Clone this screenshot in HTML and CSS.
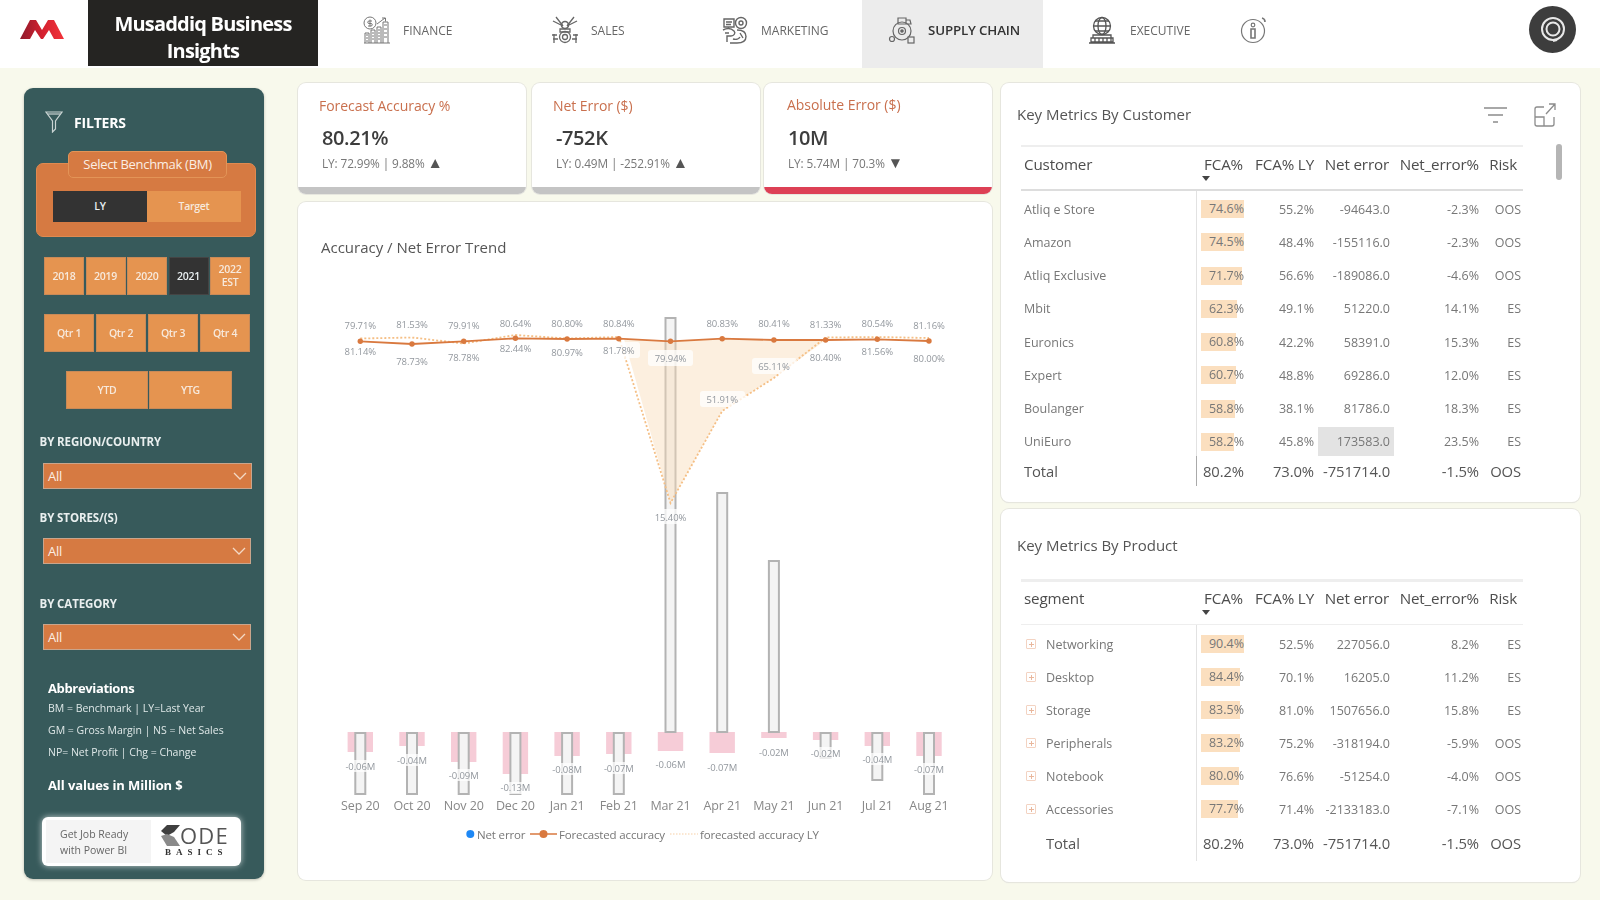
FILE: index.html
```html
<!DOCTYPE html>
<html lang="en">
<head>
<meta charset="utf-8">
<title>Musaddiq Business Insights</title>
<link rel="stylesheet" href="styles.css">
</head>
<body>
<header class="topbar">
  <div class="logo">
    <svg width="44" height="20" viewBox="0 0 44 20"><defs><linearGradient id="lg" x1="0" x2="1" y1="0" y2="0"><stop offset="0" stop-color="#8e1a2b"/><stop offset=".5" stop-color="#d3202f"/><stop offset="1" stop-color="#f2343a"/></linearGradient></defs><path fill="url(#lg)" d="M0 20 L10 1 L16 1 L22 11 L28 1 L34 1 L44 20 L34 20 L29 11 L23 20 L21 20 L15 11 L10 20 Z"/></svg>
  </div>
  <div class="brand">Musaddiq Business Insights</div>
  <nav class="nav">
    <a class="nav-item">
      <svg class="nav-icon" viewBox="0 0 28 28" fill="none" stroke="#777" stroke-width="1"><circle cx="7" cy="7" r="6"/><path d="M7 3.500v7M9 5H6a1.200 1.200 0 000 2.500h2a1.200 1.200 0 010 2.500H5"/><path d="M2 27V17h4v10M8 27V14h4v13M14 27V11h4v16M20 27V6h5v21M1 27h26M14 8l8-6M19 2h3.500v3.500M3 19h2M3 22h2M3 25h2M9 17h2M9 20h2M9 23h2M15 14h2M15 17h2M15 20h2M15 23h2M21 9h3M21 13h3M21 17h3M21 21h3"/></svg>
      <span>FINANCE</span>
    </a>
    <a class="nav-item">
      <svg class="nav-icon" viewBox="0 0 28 28" fill="none" stroke="#666" stroke-width="1.300"><circle cx="14" cy="21" r="5.500"/><circle cx="14" cy="21" r="2.500"/><path d="M5 1l7 9M23 1l-7 9M2 5l8 4M26 5l-8 4M3 27v-9M25 27v-9M1 19h5M22 19h5M2 23h5M21 23h5"/><circle cx="14" cy="9" r="3.500" stroke-width="1.600"/><path d="M9 13h10v3H9z"/></svg>
      <span>SALES</span>
    </a>
    <a class="nav-item">
      <svg class="nav-icon" viewBox="0 0 28 28" fill="none" stroke="#666" stroke-width="1.400"><circle cx="20" cy="7" r="5.500"/><circle cx="20" cy="7" r="2"/><path d="M3 3h10v8H3zM5 6h6M5 8.500h5M2 14c4-2 8-2 11 1 2 2 0 5-3 5H6v6M16 14c5 0 9 2 9 6.500S21 27 16 27H9M12 23c3 1 6 0 7-2M4 17h4M19 17l3 5"/></svg>
      <span>MARKETING</span>
    </a>
    <a class="nav-item is-active">
      <svg class="nav-icon" viewBox="0 0 28 28" fill="none" stroke="#666" stroke-width="1.200"><circle cx="14" cy="15" r="9"/><circle cx="14" cy="15" r="3.500"/><circle cx="14" cy="15" r="1.200" fill="#666"/><path d="M10 2h8v6h-8zM18 4h4l1 4h-5z"/><circle cx="4" cy="23" r="2.500" fill="#ececec"/><rect x="20" y="21" width="6" height="6" fill="#ececec"/></svg>
      <span>SUPPLY CHAIN</span>
    </a>
    <a class="nav-item nav-exec">
      <svg class="nav-icon" viewBox="0 0 28 28" fill="none" stroke="#555" stroke-width="1.300"><circle cx="14" cy="10" r="8.500"/><ellipse cx="14" cy="10" rx="4" ry="8.500"/><path d="M5.500 10h17M7 5h14M7 15h14M5 19h18v3H5zM3 22h22v4H3zM1 27h26M7 22v4M11 22v4M15 22v4M19 22v4M23 22v4"/></svg>
      <span>EXECUTIVE</span>
    </a>
    <a class="nav-item">
      <svg class="nav-icon" viewBox="0 0 28 28" fill="none" stroke="#777" stroke-width="1.200"><circle cx="13" cy="15" r="11.500"/><circle cx="13" cy="9" r="1.800"/><path d="M11 13h4v9h-4zM22 2a4 4 0 013 4" stroke-width="1.600"/></svg>
    </a>
  </nav>
  <div class="avatar">
    <svg width="30" height="30" viewBox="0 0 30 30" fill="none" stroke="#e8e8e8"><circle cx="15" cy="14" r="11" stroke-width="2"/><circle cx="15" cy="14" r="6.500" stroke-width="2"/><path d="M19 25l-4 1" stroke-width="2"/></svg>
  </div>
</header>

<main class="layout">
  <aside class="sidebar">
    <div class="filters-head">
      <svg width="18" height="22" viewBox="0 0 18 22" fill="none" stroke="#c9d4d3" stroke-width="1.200"><path d="M1 1h16L10.500 10v8l-3 3V10z"/><path d="M2.500 3h13"/></svg>
      <span>FILTERS</span>
    </div>
    <div class="bench">
      <div class="bench-tab">Select Benchmak (BM)</div>
      <div class="seg">
        <div class="btn btn-dark">LY</div>
        <div class="btn">Target</div>
      </div>
    </div>
    <div class="years">
      <div class="btn">2018</div><div class="btn">2019</div><div class="btn">2020</div><div class="btn btn-dark">2021</div><div class="btn">2022<br>EST</div>
    </div>
    <div class="qtrs">
      <div class="btn">Qtr 1</div><div class="btn">Qtr 2</div><div class="btn">Qtr 3</div><div class="btn">Qtr 4</div>
    </div>
    <div class="ytd">
      <div class="btn">YTD</div><div class="btn">YTG</div>
    </div>
    <div class="slicer-label region-label">BY REGION/COUNTRY</div>
    <div class="dropdown dropdown-wide">All<svg class="chev" viewBox="0 0 14 8" fill="none" stroke="#f3d9c5" stroke-width="1.300"><path d="M1 1l6 6 6-6"/></svg></div>
    <div class="slicer-label store-label">BY STORES/(S)</div>
    <div class="dropdown">All<svg class="chev" viewBox="0 0 14 8" fill="none" stroke="#f3d9c5" stroke-width="1.300"><path d="M1 1l6 6 6-6"/></svg></div>
    <div class="slicer-label cat-label">BY CATEGORY</div>
    <div class="dropdown">All<svg class="chev" viewBox="0 0 14 8" fill="none" stroke="#f3d9c5" stroke-width="1.300"><path d="M1 1l6 6 6-6"/></svg></div>
    <div class="abbr">
      <h3>Abbreviations</h3>
      <p>BM = Benchmark | LY=Last Year</p>
      <p>GM = Gross Margin | NS = Net Sales</p>
      <p>NP= Net Profit | Chg = Change</p>
      <h4>All values in Million $</h4>
    </div>
    <div class="promo">
      <div class="promo-text">Get Job Ready<br>with Power BI</div>
      <div class="promo-logo">
        <div class="promo-word">
          <svg width="19" height="21" viewBox="0 0 19 21"><path fill="#3f3f3f" d="M6 0h13l-6 7-7 4-6-5z"/><path fill="#8a8a8a" d="M0 11l6-2 7 3 6 9H6z"/></svg>
          <span>ODE</span>
        </div>
        <div class="promo-sub">BASICS</div>
      </div>
    </div>
  </aside>

  <section class="middle">
    <div class="kpis">
      <article class="kpi">
        <div class="kpi-title">Forecast Accuracy %</div>
        <div class="kpi-value">80.21%</div>
        <div class="kpi-sub">LY: 72.99% | 9.88% <span class="tri">▲</span></div>
        <div class="kpi-band"></div>
      </article>
      <article class="kpi">
        <div class="kpi-title">Net Error ($)</div>
        <div class="kpi-value">-752K</div>
        <div class="kpi-sub">LY: 0.49M | -252.91% <span class="tri">▲</span></div>
        <div class="kpi-band"></div>
      </article>
      <article class="kpi kpi-abs">
        <div class="kpi-title">Absolute Error ($)</div>
        <div class="kpi-value">10M</div>
        <div class="kpi-sub">LY: 5.74M | 70.3% <span class="tri">▼</span></div>
        <div class="kpi-band kpi-band-red"></div>
      </article>
    </div>
    <article class="chart-card">
      <h2 class="chart-title">Accuracy / Net Error Trend</h2>
      <svg class="chart" width="694" height="580" viewBox="298 300 694 580">
        <g class="pink">
          <rect x="347.600" y="732" width="25.400" height="20"/><rect x="399.300" y="732" width="25.400" height="14"/><rect x="451" y="732" width="25.400" height="30"/><rect x="502.700" y="732" width="25.400" height="42"/><rect x="554.400" y="732" width="25.400" height="24"/><rect x="606.100" y="732" width="25.400" height="22"/><rect x="657.800" y="732" width="25.400" height="19"/><rect x="709.500" y="732" width="25.400" height="21"/><rect x="761.200" y="732" width="25.400" height="6"/><rect x="812.900" y="732" width="25.400" height="8"/><rect x="864.600" y="732" width="25.400" height="14"/><rect x="916.300" y="732" width="25.400" height="24"/>
        </g>
        <g class="hollow">
          <rect x="355.300" y="733" width="10" height="61"/><rect x="407" y="733" width="10" height="61"/><rect x="458.700" y="733" width="10" height="61"/><rect x="510.400" y="733" width="10" height="61"/><rect x="562.100" y="733" width="10" height="61"/><rect x="613.800" y="733" width="10" height="61"/><rect x="665.500" y="318" width="10" height="414"/><rect x="717.200" y="493" width="10" height="239"/><rect x="768.900" y="561" width="10" height="171"/><rect x="820.600" y="733" width="10" height="25"/><rect x="872.300" y="733" width="10" height="47"/><rect x="924" y="733" width="10" height="61"/>
        </g>
        <polygon class="area" points="624,339 670.500,341 722.200,339 773.900,340 825.600,340 773.900,378 722.200,411 670.500,503"/>
        <polyline class="ly" points="360.300,338.500 412,337.500 463.700,343.500 515.400,335 567.100,338.500 618.800,337 670.500,503 722.200,411 773.900,378 825.600,337.500 877.300,337 929,338"/>
        <polyline class="cy" points="360.300,341.300 412,344 463.700,341.300 515.400,338.300 567.100,339 618.800,338.700 670.500,341.300 722.200,338.700 773.900,340 825.600,340 877.300,339.300 929,341"/>
        <g class="dots">
          <circle cx="360.300" cy="341.300" r="2.700"/><circle cx="412" cy="344" r="2.700"/><circle cx="463.700" cy="341.300" r="2.700"/><circle cx="515.400" cy="338.300" r="2.700"/><circle cx="567.100" cy="339" r="2.700"/><circle cx="618.800" cy="338.700" r="2.700"/><circle cx="670.500" cy="341.300" r="2.700"/><circle cx="722.200" cy="338.700" r="2.700"/><circle cx="773.900" cy="340" r="2.700"/><circle cx="825.600" cy="340" r="2.700"/><circle cx="877.300" cy="339.300" r="2.700"/><circle cx="929" cy="341" r="2.700"/>
        </g>
        <g class="label-bg">
          <rect x="648" y="350" width="45" height="16" rx="3"/><rect x="700" y="391" width="45" height="16" rx="3"/><rect x="752" y="358" width="45" height="16" rx="3"/><rect x="600" y="342" width="40" height="16" rx="3"/><rect x="652" y="509" width="38" height="15" rx="3"/>
          <rect x="344" y="760" width="32" height="12"/><rect x="396" y="754" width="32" height="12"/><rect x="447" y="769" width="32" height="12"/><rect x="499" y="782" width="32" height="12"/><rect x="551" y="763" width="32" height="12"/><rect x="603" y="762" width="32" height="12"/><rect x="810" y="747" width="32" height="12"/><rect x="861" y="753" width="32" height="12"/><rect x="913" y="763" width="32" height="12"/>
        </g>
        <g class="dl">
          <text x="360.300" y="329">79.71%</text><text x="412" y="328">81.53%</text><text x="463.700" y="329">79.91%</text><text x="515.400" y="327">80.64%</text><text x="567.100" y="327">80.80%</text><text x="618.800" y="327">80.84%</text><text x="722.200" y="327">80.83%</text><text x="773.900" y="327">80.41%</text><text x="825.600" y="328">81.33%</text><text x="877.300" y="327">80.54%</text><text x="929" y="329">81.16%</text>
          <text x="360.300" y="355">81.14%</text><text x="412" y="365">78.73%</text><text x="463.700" y="361">78.78%</text><text x="515.400" y="352">82.44%</text><text x="567.100" y="356">80.97%</text><text x="618.800" y="354">81.78%</text><text x="670.500" y="362">79.94%</text><text x="670.500" y="521">15.40%</text><text x="722.200" y="403">51.91%</text><text x="773.900" y="370">65.11%</text><text x="825.600" y="361">80.40%</text><text x="877.300" y="355">81.56%</text><text x="929" y="362">80.00%</text>
          <text x="360.300" y="770">-0.06M</text><text x="412" y="764">-0.04M</text><text x="463.700" y="779">-0.09M</text><text x="515.400" y="791">-0.13M</text><text x="567.100" y="773">-0.08M</text><text x="618.800" y="772">-0.07M</text><text x="670.500" y="768">-0.06M</text><text x="722.200" y="771">-0.07M</text><text x="773.900" y="756">-0.02M</text><text x="825.600" y="757">-0.02M</text><text x="877.300" y="763">-0.04M</text><text x="929" y="773">-0.07M</text>
        </g>
        <g class="axis">
          <text x="360.300" y="810">Sep 20</text><text x="412" y="810">Oct 20</text><text x="463.700" y="810">Nov 20</text><text x="515.400" y="810">Dec 20</text><text x="567.100" y="810">Jan 21</text><text x="618.800" y="810">Feb 21</text><text x="670.500" y="810">Mar 21</text><text x="722.200" y="810">Apr 21</text><text x="773.900" y="810">May 21</text><text x="825.600" y="810">Jun 21</text><text x="877.300" y="810">Jul 21</text><text x="929" y="810">Aug 21</text>
        </g>
        <circle cx="470.300" cy="834" r="4" fill="#1e88f5"/>
        <text class="legend" x="477" y="838.500">Net error</text>
        <path class="legend-line" d="M530 834h27"/><circle cx="543.500" cy="834" r="4" fill="#d9793f"/>
        <text class="legend" x="559" y="838.500">Forecasted accuracy</text>
        <path class="legend-dots" d="M670 834h28"/>
        <text class="legend" x="700" y="838.500">forecasted accuracy LY</text>
      </svg>
    </article>
  </section>

  <section class="right">
    <article class="panel panel-customer">
      <div class="panel-head">
        <h2>Key Metrics By Customer</h2>
        <div class="panel-tools">
          <svg width="23" height="18" viewBox="0 0 23 18" fill="none" stroke="#8c8c8c" stroke-width="1.300"><path d="M0 2h23M4 9h15M9 16h5"/></svg>
          <svg width="22" height="24" viewBox="0 0 22 24" fill="none" stroke="#8c8c8c" stroke-width="1.300"><path d="M10 4H3a2 2 0 00-2 2v15a2 2 0 002 2h15a2 2 0 002-2v-7M1 14h9v9M12 11l9-10M15 1h6v6"/></svg>
        </div>
      </div>
      <div class="scrollbar"></div>
      <div class="table">
        <div class="row thead"><div>Customer</div><div class="h-fca">FCA%<i class="sort"></i></div><div>FCA% LY</div><div class="h-net">Net error</div><div>Net_error%</div><div class="h-risk">Risk</div></div>
        <div class="tbody tbody-c">
          <div class="row"><div>Atliq e Store</div><div class="fca"><b style="width:43px"></b><span>74.6%</span></div><div>55.2%</div><div>-94643.0</div><div>-2.3%</div><div>OOS</div></div>
          <div class="row"><div>Amazon</div><div class="fca"><b style="width:43px"></b><span>74.5%</span></div><div>48.4%</div><div>-155116.0</div><div>-2.3%</div><div>OOS</div></div>
          <div class="row"><div>Atliq Exclusive</div><div class="fca"><b style="width:41px"></b><span>71.7%</span></div><div>56.6%</div><div>-189086.0</div><div>-4.6%</div><div>OOS</div></div>
          <div class="row"><div>Mbit</div><div class="fca"><b style="width:36px"></b><span>62.3%</span></div><div>49.1%</div><div>51220.0</div><div>14.1%</div><div>ES</div></div>
          <div class="row"><div>Euronics</div><div class="fca"><b style="width:35px"></b><span>60.8%</span></div><div>42.2%</div><div>58391.0</div><div>15.3%</div><div>ES</div></div>
          <div class="row"><div>Expert</div><div class="fca"><b style="width:35px"></b><span>60.7%</span></div><div>48.8%</div><div>69286.0</div><div>12.0%</div><div>ES</div></div>
          <div class="row"><div>Boulanger</div><div class="fca"><b style="width:34px"></b><span>58.8%</span></div><div>38.1%</div><div>81786.0</div><div>18.3%</div><div>ES</div></div>
          <div class="row"><div>UniEuro</div><div class="fca"><b style="width:33.500px"></b><span>58.2%</span></div><div>45.8%</div><div class="hl">173583.0</div><div>23.5%</div><div>ES</div></div>
        </div>
        <div class="row total total-c"><div>Total</div><div>80.2%</div><div>73.0%</div><div>-751714.0</div><div>-1.5%</div><div>OOS</div></div>
      </div>
    </article>

    <article class="panel panel-product">
      <div class="panel-head panel-head-p">
        <h2>Key Metrics By Product</h2>
      </div>
      <div class="table table-p">
        <div class="row thead thead-p"><div>segment</div><div class="h-fca">FCA%<i class="sort"></i></div><div>FCA% LY</div><div class="h-net">Net error</div><div>Net_error%</div><div class="h-risk">Risk</div></div>
        <div class="tbody tbody-p">
          <div class="row"><div class="seg-name"><i class="plus"></i>Networking</div><div class="fca"><b style="width:43px"></b><span>90.4%</span></div><div>52.5%</div><div>227056.0</div><div>8.2%</div><div>ES</div></div>
          <div class="row"><div class="seg-name"><i class="plus"></i>Desktop</div><div class="fca"><b style="width:39.500px"></b><span>84.4%</span></div><div>70.1%</div><div>16205.0</div><div>11.2%</div><div>ES</div></div>
          <div class="row"><div class="seg-name"><i class="plus"></i>Storage</div><div class="fca"><b style="width:39px"></b><span>83.5%</span></div><div>81.0%</div><div>1507656.0</div><div>15.8%</div><div>ES</div></div>
          <div class="row"><div class="seg-name"><i class="plus"></i>Peripherals</div><div class="fca"><b style="width:39px"></b><span>83.2%</span></div><div>75.2%</div><div>-318194.0</div><div>-5.9%</div><div>OOS</div></div>
          <div class="row"><div class="seg-name"><i class="plus"></i>Notebook</div><div class="fca"><b style="width:38px"></b><span>80.0%</span></div><div>76.6%</div><div>-51254.0</div><div>-4.0%</div><div>OOS</div></div>
          <div class="row"><div class="seg-name"><i class="plus"></i>Accessories</div><div class="fca"><b style="width:37px"></b><span>77.7%</span></div><div>71.4%</div><div>-2133183.0</div><div>-7.1%</div><div>OOS</div></div>
        </div>
        <div class="row total total-p"><div class="seg-total">Total</div><div>80.2%</div><div>73.0%</div><div>-751714.0</div><div>-1.5%</div><div>OOS</div></div>
      </div>
    </article>
  </section>
</main>
</body>
</html>
```
FILE: styles.css
```css
* { box-sizing: border-box; }
html, body { margin: 0; height: 900px; overflow: hidden; }
body {
  background: #f8f9ec;
  font-family: "Open Sans", "Noto Sans", sans-serif;
  color: #666;
  letter-spacing: -0.3px;
}
h2, h3, h4, p { margin: 0; font-weight: 400; }
.topbar, .layout { filter: blur(.35px); }

/* Top bar */
.topbar { display: flex; height: 68px; background: #fff; position: relative; }
.logo { width: 88px; padding: 19px 0 0 20px; }
.brand {
  width: 230px; height: 66px; background: #252422; color: #fff;
  font-size: 20px; font-weight: 700; line-height: 26.500px; text-align: center;
  letter-spacing: -0.8px; padding: 11px 14px 0;
}
.nav { display: grid; grid-template-columns: 188px 170px 141px 181px 197px 28px; margin-left: 45px; }
.nav-item { display: flex; align-items: center; gap: 12px; font-size: 12px; color: #666; letter-spacing: 0; height: 68px; padding-bottom: 8px; }
.nav-icon { width: 28px; height: 28px; flex: none; }
.nav-item.is-active { background: #ececec; padding-left: 26px; color: #333; font-weight: 600; font-size: 13.300px; letter-spacing: -0.15px; }
.nav-exec { padding-left: 45px; gap: 14px; }
.avatar {
  position: absolute; right: 24px; top: 6px; width: 47px; height: 47px; border-radius: 50%;
  background: #3d3d3d; display: flex; align-items: center; justify-content: center;
}

/* Layout */
.layout { display: grid; grid-template-columns: 240px 728px 588px; padding: 15px 0 0 24px; }
.middle { margin-left: 34px; }
.right { margin-left: 9px; }

/* Sidebar */
.sidebar {
  margin-top: 5px; height: 791px; background: #375a5b; border-radius: 9px; color: #fff;
  box-shadow: 0 1px 3px rgba(0,0,0,.25); padding: 23px 0 0;
  display: flex; flex-direction: column;
}
.filters-head { display: flex; align-items: center; gap: 11px; padding-left: 21px; height: 22px; font-size: 14px; font-weight: 700; letter-spacing: -0.2px; }
.bench { position: relative; margin: 30px 8px 0 12px; height: 74px; background: #d67a42; border: 1px solid #e08a50; border-radius: 7px; padding: 27px 15px 0 16px; }
.bench-tab {
  position: absolute; left: 31px; top: -13px; width: 159px; height: 27px;
  background: #d67a42; border: 1px solid #e39457; border-radius: 5px;
  font-size: 13px; line-height: 25px; text-align: center; color: #fbeee4;
}
.btn {
  display: flex; align-items: center; justify-content: center; text-align: center;
  background: #e59450; border: 1px solid #c98a58; color: #f7e9dc; font-size: 10.500px; font-weight: 600; line-height: 13px;
}
.btn-dark { background: #333; border-color: #444; color: #e8eef0; }
.seg { display: grid; grid-template-columns: 94px 94px; height: 31px; }
.seg .btn { border: 0; }
.years { display: grid; grid-template-columns: repeat(5, 40px); column-gap: 1.500px; height: 38px; margin: 20px 0 0 20px; }
.qtrs { display: grid; grid-template-columns: repeat(4, 50px); column-gap: 2px; height: 38px; margin: 19px 0 0 20px; }
.ytd { display: grid; grid-template-columns: 82px 83px; column-gap: 1px; height: 38px; margin: 19px 0 0 42px; }
.slicer-label { font-size: 11.500px; font-weight: 700; line-height: 16px; color: #e9efef; margin-left: 15.500px; letter-spacing: -0.1px; }
.region-label { margin-top: 25px; }
.store-label { margin-top: 21px; }
.cat-label { margin-top: 32px; }
.dropdown {
  position: relative; margin: 12px 13px 0 19px; height: 26px; background: #d67a42;
  border: 1px solid #c9a58c; color: #fbeee4; font-size: 13px; line-height: 24px; padding-left: 4px;
}
.dropdown-wide { margin-right: 12px; margin-top: 13px; }
.chev { position: absolute; right: 4px; top: 8px; width: 14px; height: 8px; }
.abbr { margin: 29px 0 0 24px; color: #dfe8e8; }
.abbr h3 { font-size: 13px; font-weight: 700; line-height: 18px; color: #fff; letter-spacing: -0.35px; }
.abbr p { font-size: 10.500px; line-height: 22px; letter-spacing: 0; }
.abbr h4 { font-size: 13px; font-weight: 700; line-height: 18px; color: #fff; margin-top: 13px; letter-spacing: -0.1px; }
.promo {
  margin: 23px 0 0 18px; width: 199px; height: 49px; background: #fff; border-radius: 6px;
  box-shadow: 0 0 6px rgba(255,255,255,.7); padding: 3px 4px; display: flex;
}
.promo-text { width: 105px; background: #f4f4f4; color: #666; font-size: 10.500px; line-height: 16px; padding: 6px 0 0 14px; letter-spacing: 0; }
.promo-logo { flex: 1; padding: 4px 0 0 10px; }
.promo-word { display: flex; align-items: center; height: 22px; color: #555; font-size: 22px; letter-spacing: 1.200px; font-weight: 400; }
.promo-sub { font-family: "Liberation Serif", serif; font-size: 9px; font-weight: 700; color: #333; letter-spacing: 5px; line-height: 12px; margin: 0 0 0 4px; }

/* KPI */
.kpis { display: flex; height: 111px; }
.kpi {
  display: flex; flex-direction: column; width: 228px; background: #fff; border-radius: 8px; overflow: hidden;
  box-shadow: 0 0 0 1px #e6e6de;
}
.kpi + .kpi { margin-left: 6px; }
.kpi + .kpi-abs { margin-left: 4px; }
.kpi-title { font-size: 14px; color: #c9704e; margin: 13px 0 0 21px; line-height: 20px; letter-spacing: -0.05px; }
.kpi-abs .kpi-title { margin: 12px 0 0 23px; }
.kpi-value { font-size: 20px; font-weight: 600; color: #3d3d3d; margin: 9px 0 0 24px; line-height: 26px; letter-spacing: -0.4px; }
.kpi-abs .kpi-value { margin-top: 10px; }
.kpi-sub { font-size: 11.800px; color: #777; margin: 3px 0 0 24px; line-height: 18px; letter-spacing: -0.1px; white-space: nowrap; }
.tri { font-size: 15.500px; color: #555; line-height: 14px; }
.kpi-band { margin-top: auto; height: 7px; background: #c4c4c4; }
.kpi-band-red { background: #dd4055; }

/* Chart */
.chart-card { margin-top: 8px; height: 678px; background: #fff; border-radius: 8px; box-shadow: 0 0 0 1px #e6e6de; }
.chart-title { height: 98px; padding: 34px 0 0 23px; font-size: 15px; line-height: 22px; color: #555; letter-spacing: 0; }
.chart { display: block; }
.pink rect { fill: #f6ccd7; }
.hollow rect { fill: #f4f4f4; stroke: #b3b3b3; stroke-width: 2; }
.area { fill: #f9dcb9; opacity: .45; }
.ly { fill: none; stroke: #f5bf85; stroke-width: 1.800; stroke-dasharray: 2 2; }
.cy { fill: none; stroke: #d9793f; stroke-width: 1.800; }
.dots circle { fill: #d9793f; }
.label-bg rect { fill: #fff; opacity: .75; }
.dl text { font-size: 9.500px; fill: #93989e; text-anchor: middle; letter-spacing: -0.1px; }
.axis text { font-size: 12.500px; fill: #888; text-anchor: middle; letter-spacing: -0.1px; }
.legend { font-size: 11.500px; fill: #777; letter-spacing: -0.15px; }
.legend-line { stroke: #d9793f; stroke-width: 1.500; fill: none; }
.legend-dots { stroke: #f7cfa5; stroke-width: 1.200; stroke-dasharray: 1.500 1.500; fill: none; }

/* Right panels */
.right { display: flex; flex-direction: column; gap: 7px; }
.panel { position: relative; background: #fff; border-radius: 8px; box-shadow: 0 0 0 1px #e6e6de, 0 1px 1px #ddd; padding-left: 20px; }
.panel-customer { height: 419px; }
.panel-product { height: 373px; }
.panel-head { display: flex; align-items: center; justify-content: space-between; height: 62px; margin-left: -4px; padding: 0 24px 1px 0; }
.panel-head h2 { font-size: 15px; color: #555; letter-spacing: 0; line-height: 20px; }
.panel-head-p { height: 70px; padding: 2px 24px 0 0; }
.panel-tools { display: flex; gap: 27px; align-items: center; padding-top: 3px; }
.scrollbar { position: absolute; left: 555px; top: 61px; width: 6px; height: 36px; border-radius: 3px; background: #b5b5b5; }
.table { width: 502px; }
.row { display: grid; grid-template-columns: 175px 48px 70px 76px 89px 42px; align-items: center; text-align: right; font-size: 12.500px; color: #777; letter-spacing: 0; }
.row > div:first-child { text-align: left; padding-left: 3px; }
.thead { position: relative; height: 46px; border-top: 2px solid #eee; border-bottom: 2px solid #ddd; align-items: start; padding-top: 7px; font-size: 15.200px; color: #4d4d4d; line-height: 20px; letter-spacing: -0.15px; }
.thead > div { white-space: nowrap; }
.thead-p { border-top-width: 3px; border-bottom: 1px solid #eee; padding-top: 6px; }
.h-fca { position: relative; padding-right: 1px; }
.h-net { padding-right: 1px; }
.h-risk { padding-right: 4px; }
.sort { position: absolute; left: 6px; top: 22px; border: 4.500px solid transparent; border-top: 5px solid #444; border-bottom: 0; }
.tbody { position: relative; }
.tbody-c { padding-top: 1.500px; }
.tbody-c .row { height: 33.250px; }
.tbody-p { padding-top: 2.500px; }
.tbody-p .row { height: 33px; }
.tbody::before { content: ""; position: absolute; left: 175px; top: 0; bottom: 0; width: 1px; background: #e2e2e2; }
.fca { position: relative; height: 18px; line-height: 18px; }
.fca b { position: absolute; left: 4.500px; top: 0; height: 18px; background: #fbdfbf; }
.fca span { position: relative; }
.hl { background: #e3e3e3; margin: 0 -4px 0 3.500px; padding-right: 4px; height: 29px; line-height: 29px; }
.total { position: relative; font-size: 14.800px; color: #555; letter-spacing: -0.1px; font-weight: 500; }
.total::before { content: ""; position: absolute; left: 175px; top: 0; bottom: 0; width: 1px; background: #aaa; }
.total-c { height: 30px; margin-top: -2.500px; }
.total-p { height: 36px; margin-top: -1px; }
.total-p::before { background: #e2e2e2; }
.seg-name { display: flex; align-items: center; padding-left: 5px !important; }
.seg-total { padding-left: 25px !important; }
.plus { position: relative; width: 10px; height: 10px; border: 1px solid #f3d3c2; border-radius: 1px; margin-right: 10px; flex: none; }
.plus::before { content: ""; position: absolute; left: 1.500px; top: 3.500px; width: 5px; height: 1px; background: #e9b79c; }
.plus::after { content: ""; position: absolute; left: 3.500px; top: 1.500px; width: 1px; height: 5px; background: #e9b79c; }
```
